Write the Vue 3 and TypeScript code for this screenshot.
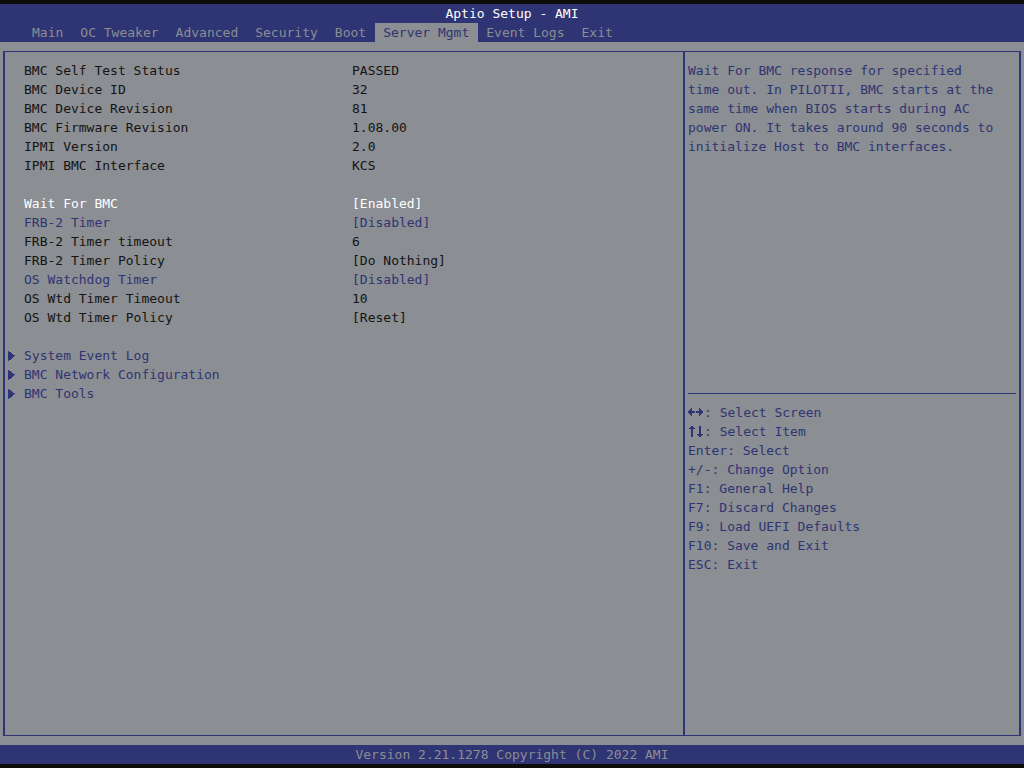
<script setup lang="ts">
import { reactive, ref } from 'vue'

interface Info { label: string; value: string }
interface Setting {
  id: string
  label: string
  tone: 'selected' | 'active' | 'locked'
  value: string
  options?: string[]
}

const tabs = ['Main', 'OC Tweaker', 'Advanced', 'Security', 'Boot', 'Server Mgmt', 'Event Logs', 'Exit']
const current = ref('Server Mgmt')

const info: Info[] = [
  { label: 'BMC Self Test Status', value: 'PASSED' },
  { label: 'BMC Device ID', value: '32' },
  { label: 'BMC Device Revision', value: '81' },
  { label: 'BMC Firmware Revision', value: '1.08.00' },
  { label: 'IPMI Version', value: '2.0' },
  { label: 'IPMI BMC Interface', value: 'KCS' },
]

const toggle = ['Enabled', 'Disabled']
const policies = ['Do Nothing', 'Reset', 'Power Down', 'Power Cycle']

const settings = reactive<Setting[]>([
  { id: 'wait-bmc', label: 'Wait For BMC', tone: 'selected', value: 'Enabled', options: toggle },
  { id: 'frb2', label: 'FRB-2 Timer', tone: 'active', value: 'Disabled', options: toggle },
  { id: 'frb2-timeout', label: 'FRB-2 Timer timeout', tone: 'locked', value: '6' },
  { id: 'frb2-policy', label: 'FRB-2 Timer Policy', tone: 'locked', value: 'Do Nothing', options: policies },
  { id: 'os-wtd', label: 'OS Watchdog Timer', tone: 'active', value: 'Disabled', options: toggle },
  { id: 'os-wtd-timeout', label: 'OS Wtd Timer Timeout', tone: 'locked', value: '10' },
  { id: 'os-wtd-policy', label: 'OS Wtd Timer Policy', tone: 'locked', value: 'Reset', options: policies },
])

const submenus = ['System Event Log', 'BMC Network Configuration', 'BMC Tools']

const keys = [
  'Enter: Select',
  '+/-: Change Option',
  'F1: General Help',
  'F7: Discard Changes',
  'F9: Load UEFI Defaults',
  'F10: Save and Exit',
  'ESC: Exit',
]
</script>

<template>
  <div class="screen">
    <header class="bar">
      <h1>Aptio Setup - AMI</h1>
      <nav>
        <button
          v-for="tab in tabs"
          :key="tab"
          type="button"
          :class="['tab', { current: tab === current }]"
          @click="current = tab"
        >{{ tab }}</button>
      </nav>
    </header>

    <main>
      <div class="frame">
        <section class="options">
          <dl class="group">
            <div v-for="item in info" :key="item.label" class="row">
              <dt>{{ item.label }}</dt>
              <dd>{{ item.value }}</dd>
            </div>
          </dl>

          <div class="group">
            <div v-for="s in settings" :key="s.id" :class="['row', s.tone]">
              <label :for="s.id">{{ s.label }}</label>
              <select v-if="s.options" :id="s.id" v-model="s.value" :disabled="s.tone === 'locked'">
                <option v-for="o in s.options" :key="o" :value="o">[{{ o }}]</option>
              </select>
              <input v-else :id="s.id" v-model="s.value" type="text" :disabled="s.tone === 'locked'">
            </div>
          </div>

          <ul class="submenus">
            <li v-for="name in submenus" :key="name">
              <a href="#">
                <svg width="8" height="10" viewBox="0 0 8 10" aria-hidden="true" shape-rendering="crispEdges">
                  <path d="M0 0h1v1h2v1h1v1h1v1h2v1h-1v1h-1v1h-1v1h-1v1h-2v1h-1z" />
                </svg>
                {{ name }}
              </a>
            </li>
          </ul>
        </section>

        <aside class="help">
          <p>Wait For BMC response for specified time out. In PILOTII, BMC starts at the same time when BIOS starts during AC power ON. It takes around 90 seconds to initialize Host to BMC interfaces.</p>
          <hr>
          <ul class="keys">
            <li>
              <svg width="16" height="19" viewBox="0 0 16 19" role="img" aria-label="Left and right" shape-rendering="crispEdges">
                <path d="M0 8h1v-1h1v-1h1v-1h1v3h3v2h-3v3h-1v-1h-1v-1h-1v-1h-1zM8 8h3v-3h1v1h1v1h1v1h1v2h-1v1h-1v1h-1v1h-1v-3h-3z" />
              </svg>: Select Screen
            </li>
            <li>
              <svg width="16" height="19" viewBox="0 0 16 19" role="img" aria-label="Up and down" shape-rendering="crispEdges">
                <path d="M3 4h2v1h1v1h1v1h-2v8h-2v-8h-2v-1h1v-1h1zM11 4h2v8h2v1h-1v1h-1v1h-2v-1h-1v-1h-1v-1h2z" />
              </svg>: Select Item
            </li>
            <li v-for="k in keys" :key="k">{{ k }}</li>
          </ul>
        </aside>
      </div>
    </main>

    <footer class="bar">Version 2.21.1278 Copyright (C) 2022 AMI</footer>
  </div>
</template>

<style>
body {
  margin: 0;
  background: #0c0c0d;
}
</style>

<style scoped>
.screen {
  --blue: #2f3474;
  --grey: #8b8e92;
  --ink: #141414;
  box-sizing: border-box;
  min-height: 100vh;
  padding: 4px 0;
  display: flex;
  flex-direction: column;
  background: #0c0c0d;
  color: var(--ink);
  font: 13px/19px "DejaVu Sans Mono", monospace;
}
.bar {
  background: var(--blue);
  color: var(--grey);
  text-align: center;
}
h1 {
  margin: 0;
  font: inherit;
  color: #fff;
}
nav {
  display: flex;
  padding-left: 24px;
}
.tab {
  padding: 0 9px 0 8px;
  border: 0;
  background: none;
  color: inherit;
  font: inherit;
}
.tab.current {
  background: var(--grey);
  color: var(--blue);
}
main {
  flex: 1;
  display: flex;
  padding: 9px 3px;
  background: var(--grey);
}
.frame {
  flex: 1;
  display: grid;
  grid-template-columns: 340fr 167fr;
  border: solid var(--blue);
  border-width: 1px 2px;
}
.options {
  padding: 9px 0 9px 3px;
  border-right: 2px solid var(--blue);
}
.group {
  margin: 0 0 19px;
  padding-left: 16px;
}
.row {
  display: grid;
  grid-template-columns: 328px 1fr;
  justify-items: start;
}
dd {
  margin: 0;
}
.row select,
.row input {
  appearance: none;
  width: 160px;
  height: 19px;
  margin: 0;
  padding: 0;
  border: 0;
  border-radius: 0;
  background: none;
  color: inherit;
  font: inherit;
  opacity: 1;
}
.selected {
  color: #fff;
}
.active {
  color: var(--blue);
}
ul {
  margin: 0;
  padding: 0;
  list-style: none;
}
.submenus a {
  display: flex;
  align-items: center;
  gap: 8px;
  color: var(--blue);
  text-decoration: none;
}
svg {
  fill: currentColor;
}
.help {
  display: grid;
  grid-template-rows: 1fr 1px 1fr;
  padding: 0 3px;
  color: var(--blue);
}
.help p {
  max-width: 39ch;
  margin: 0;
  padding: 9px 0;
}
hr {
  width: 100%;
  height: 1px;
  margin: 0;
  border: 0;
  background: var(--blue);
}
.keys {
  padding: 9px 0;
}
.keys li {
  height: 19px;
}
.keys svg {
  vertical-align: top;
}
</style>
